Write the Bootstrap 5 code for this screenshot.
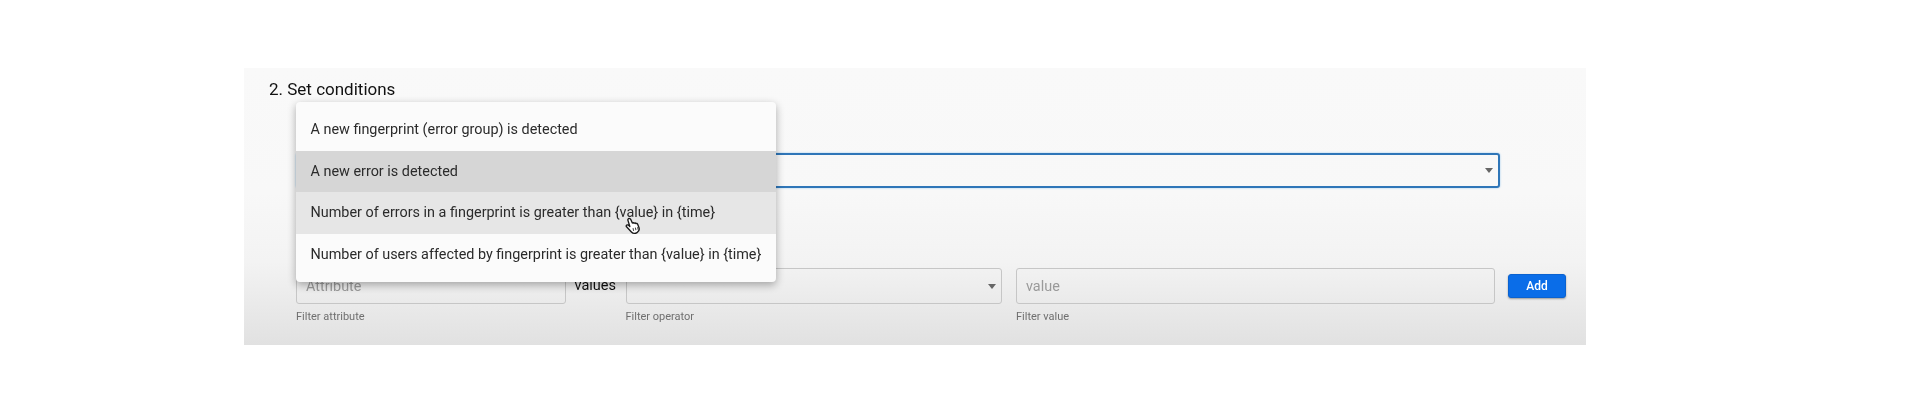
<!DOCTYPE html>
<html lang="en">
<head>
<meta charset="utf-8">
<title>Set conditions</title>
<link rel="stylesheet" href="https://cdn.jsdelivr.net/npm/bootstrap@5.3.0/dist/css/bootstrap.min.css">
<style>
html,body{background:#fff;height:405px;overflow:hidden}
body{font-family:Roboto,"Liberation Sans",sans-serif;color:#1f1f1f}
.cond-panel{width:1342px;height:277px;margin:68px 0 0 244px;padding:11px 0 0 25px;position:relative;background:linear-gradient(180deg,#f9f9f9 0,#f8f8f8 45%,#f3f3f3 70%,#e1e1e1 100%);filter:blur(.35px)}
.cond-title{font-size:17px;font-weight:400;line-height:20px;margin:0;color:#111}
.cond-body{padding-left:27px}
.cond-main{width:1204px;height:35px;margin-top:54px}
.cond-select{background-color:transparent;border-radius:3px;font-size:14px;padding:0 24px 0 10px;background-position:right 5px center;background-size:8px 5px;background-image:url("data:image/svg+xml,%3Csvg xmlns='http://www.w3.org/2000/svg' viewBox='0 0 10 6'%3E%3Cpath d='M0 0h10L5 6z' fill='%23666'/%3E%3C/svg%3E")}
.cond-main.cond-select{border:2px solid #2f76b8;box-shadow:0 0 2px #8fc0ec}
.cond-row{margin-top:80px;align-items:flex-start}
.cond-field{height:36px;border:1px solid #c6c6c6;border-radius:3px;background-color:transparent;font-size:14.4px}
input.cond-field{padding:0 9px}
input.cond-field::placeholder{color:#9a9a9a;opacity:1}
.cond-hint{font-size:11px;line-height:13px;margin-top:6px;color:#6f6f6f}
.col-attr{width:270px}
.col-op{width:376.500px;margin-left:59.500px}
.col-val{width:479px;margin-left:14px}
.cond-join{font-size:14.5px;line-height:36px;margin-left:8.500px;width:44px;margin-right:-52.500px;color:#111}
.cond-add{width:58px;height:24px;margin:6px 0 0 13px;padding:0;font-size:12px;font-weight:500;line-height:22px;border-radius:3px;background:#0a6de8;border-color:#0a62d0;box-shadow:0 1px 2px rgba(0,0,0,.35)}
.cond-menu{display:block;left:52px;top:34px;width:480px;height:180px;padding:7px 0;margin:0;border:0;border-radius:4px;background:#fbfbfb;box-shadow:0 3px 8px rgba(0,0,0,.32)}
.cond-menu .dropdown-item{height:41.600px;line-height:41.600px;padding:0 14.500px;font-size:14.400px;color:#2b2b2b;white-space:nowrap}
.cond-menu .item-sel{background:#d6d6d6}
.cond-menu .item-hov{background:#e6e6e6}
.cond-cursor{left:381px;top:149px;width:16px;height:18px;z-index:1001}
</style>
</head>
<body>
<div class="cond-panel">
  <h2 class="cond-title">2. Set conditions</h2>
  <div class="cond-body">
    <select class="form-select cond-select cond-main" aria-label="Condition"><option></option></select>
    <div class="d-flex cond-row">
      <div class="col-attr">
        <input class="form-control cond-field" placeholder="Attribute">
        <div class="cond-hint">Filter attribute</div>
      </div>
      <div class="cond-join">values</div>
      <div class="col-op">
        <select class="form-select cond-select cond-field" aria-label="Filter operator"><option></option></select>
        <div class="cond-hint">Filter operator</div>
      </div>
      <div class="col-val">
        <input class="form-control cond-field" placeholder="value">
        <div class="cond-hint">Filter value</div>
      </div>
      <button type="button" class="btn btn-primary cond-add">Add</button>
    </div>
  </div>
  <div class="dropdown-menu position-absolute cond-menu">
    <a class="dropdown-item" href="#">A new fingerprint (error group) is detected</a>
    <a class="dropdown-item item-sel" href="#">A new error is detected</a>
    <a class="dropdown-item item-hov" href="#">Number of errors in a fingerprint is greater than {value} in {time}</a>
    <a class="dropdown-item" href="#">Number of users affected by fingerprint is greater than {value} in {time}</a>
  </div>
  <svg class="position-absolute cond-cursor" viewBox="0 0 15 17" aria-hidden="true">
    <path d="M3.2 1.6c.9-.6 1.8-.1 2.2.8l1.5 3.3c.5-.5 1.3-.4 1.7.2.5-.4 1.3-.3 1.7.3.6-.3 1.3-.1 1.6.6l1.2 3.1c.6 1.800-.1 3.800-1.800 4.800-1.700 1-3.900.9-5.300-.6L1.400 9.300c-.6-.7-.3-1.600.5-1.800.6-.1 1.200.1 1.700.6l.9.9L2.800 3.400c-.3-.7-.1-1.400.4-1.800z" fill="#fff" stroke="#1a1a1a" stroke-width="1.300" stroke-linejoin="round"/>
    <path d="M7.500 10.500l.6 2.500M9.700 10l.6 2.500M11.800 9.500l.6 2.500" stroke="#444" stroke-width="1" fill="none"/>
  </svg>
</div>
<script src="https://cdn.jsdelivr.net/npm/bootstrap@5.3.0/dist/js/bootstrap.bundle.min.js"></script>
</body>
</html>
